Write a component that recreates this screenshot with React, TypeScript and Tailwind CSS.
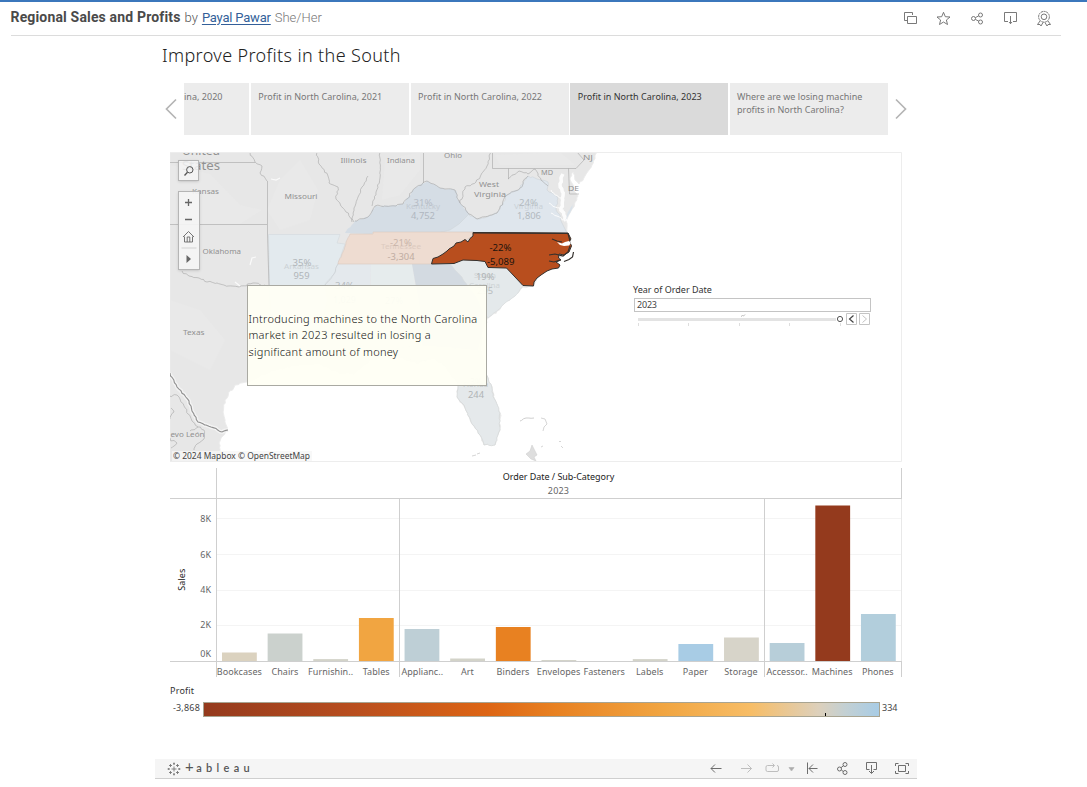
import React from 'react';

type Pt = [number, number];

// Builds an irregular line through the given points, as for rivers and coasts.
function rough(pts: Pt[], amp = 1, close = false): string {
  const out: string[] = [];
  let seed = 7;
  const rnd = () => {
    seed = (seed * 16807) % 2147483647;
    return seed / 2147483647 - 0.5;
  };
  const all = close ? [...pts, pts[0]] : pts;
  all.forEach((p, i) => {
    if (i === 0) {
      out.push(`M${p[0]} ${p[1]}`);
      return;
    }
    const q = all[i - 1];
    const len = Math.hypot(p[0] - q[0], p[1] - q[1]);
    const n = Math.max(1, Math.round(len / 2.5));
    for (let k = 1; k < n; k++) {
      const t = k / n;
      const x = q[0] + (p[0] - q[0]) * t + rnd() * 2 * amp;
      const y = q[1] + (p[1] - q[1]) * t + rnd() * 2 * amp;
      out.push(`L${x.toFixed(1)} ${y.toFixed(1)}`);
    }
    out.push(`L${p[0]} ${p[1]}`);
  });
  return out.join('') + (close ? 'Z' : '');
}

const mainland: Pt[] = [
  [597, 152], [592, 165], [585, 176], [579, 184], [575, 180], [573, 172], [570, 178], [574, 190], [578, 196], [573, 208],
  [566, 221], [567, 233], [570, 245], [558, 262], [548, 270], [537, 278], [533, 286], [523, 287], [515, 296], [505, 303], [497, 311], [488, 318],
  [482, 332], [481, 350], [486, 372], [492, 390], [500, 413], [500, 430], [495, 445], [484, 445], [480, 435], [471, 422], [465, 408],
  [457, 397], [458, 384], [445, 366], [433, 358], [418, 364], [400, 358], [370, 360], [355, 374], [340, 374], [320, 364], [295, 366],
  [270, 372], [247, 382], [235, 385], [225, 400], [223, 412], [227, 430], [219, 443], [221, 455], [218, 462],
];
const landPath = `M170 152L597 152${rough(mainland, 1).replace(/^M/, 'L')}L170 462Z`;

const kentucky: Pt[] = [
  [345, 233], [355, 221], [368, 217], [375, 206], [390, 206], [403, 204], [415, 188], [427, 181], [440, 188], [455, 190],
  [460, 203], [469, 214],
];
const virginiaTop: Pt[] = [
  [469, 214], [477, 219], [487, 217], [497, 213], [507, 195], [520, 188], [528, 176], [537, 179], [548, 182], [547, 190], [558, 198], [556, 208], [562, 223],
];
const nc =
  'M473 232.5L568 233L571 239L569.5 241L571.5 246L569 252L564 255L559 254L558.5 258L561 260L556 262L560 265L558.5 268L552 269L547 271L541 275L537 278L534 282L533.5 286L523 285.5L506.5 268L488 267.5L485 261.5L477 260.5L463 260L454 263.5L431.5 264L433 258.5L438 257L443 254L447 251L449 249L454 246L456 243L461 242L465 239.5L468 242L470 238.5L473 236Z';

const rioGrande = rough([[170, 373], [177, 387], [189, 401], [192, 411], [198, 422], [211, 427], [222, 432], [228, 430]], 0.7);

const borders: string[] = [
  'M170 162.5H255', 'M170 224.5H267', 'M267.5 181V234L269 285',
  rough([[250, 152], [255, 162], [262, 166], [260, 173], [267, 181]], 1),
  rough([[317, 152], [319, 164], [328, 176], [329, 183], [338, 187], [336, 199], [346, 212], [354, 222]], 1),
  rough([[380, 152], [380, 178], [376, 192], [372, 206]], 0.7),
  'M423.5 152V183',
  rough([[491, 152], [487, 166], [476, 182], [465, 187], [460, 203], [469, 214], [477, 219], [497, 213], [507, 195], [520, 188], [528, 176]], 1),
  rough([[352, 222], [354, 208], [358, 197], [362, 187], [368, 176]], 0.7),
  rough([[355, 221], [368, 217], [375, 206], [390, 206], [403, 204], [415, 188], [427, 181], [440, 188], [455, 190], [460, 203]], 1),
  'M492.5 152V168.500H576L584 160L577 152', 'M508.500 168.500V179', 'M568.500 168.500L569.500 194H579',
  rough([[508, 179], [519, 171], [528, 174], [535, 169], [541, 180], [548, 186]], 1),
  rough([[182, 271], [189, 276], [199, 278], [207, 282], [217, 283], [228, 286], [239, 287], [253, 283], [269, 287]], 1),
  rough([[170, 396], [177, 395], [180, 399], [184, 406], [188, 414], [192, 421], [198, 427]], 1.2),
  rough([[170, 419], [174, 412], [171, 408]], 1.5),
  rough([[194, 450], [197, 444], [204, 439], [204, 430], [198, 427], [190, 431]], 1),
  rough([[170, 438], [177, 443], [171, 448]], 1.5),
];

interface MapText {
  t: string;
  x: number;
  y: number;
  w: number;
  s?: number;
  c?: string;
}
const labels: MapText[] = [
  { t: 'United', x: 182, y: 155, w: 38, s: 12 },
  { t: 'States', x: 182, y: 169.5, w: 38, s: 12 },
  { t: 'Kansas', x: 192, y: 194, w: 27 },
  { t: 'Oklahoma', x: 202.500, y: 254, w: 38.500 },
  { t: 'Missouri', x: 284.500, y: 199, w: 33 },
  { t: 'Illinois', x: 340.500, y: 163, w: 26 },
  { t: 'Indiana', x: 387, y: 163, w: 28 },
  { t: 'Ohio', x: 444, y: 158, w: 18 },
  { t: 'West', x: 479, y: 186.500, w: 20 },
  { t: 'Virginia', x: 474, y: 196.500, w: 32 },
  { t: 'MD', x: 541, y: 175, w: 12 },
  { t: 'DE', x: 568, y: 191, w: 11 },
  { t: 'NJ', x: 583, y: 160, w: 10 },
  { t: 'Texas', x: 183, y: 335, w: 21.500 },
  { t: 'evo León', x: 170.500, y: 436.500, w: 34 },
  { t: 'Kentucky', x: 406, y: 208.500, w: 34, c: '#c3cad2' },
  { t: 'Virginia', x: 514, y: 208.500, w: 29, c: '#cad1d7' },
  { t: 'Tennessee', x: 381, y: 249, w: 40, c: '#dccabf' },
  { t: 'Arkansas', x: 284, y: 268.500, w: 35, c: '#cbd1d5' },
  { t: 'South', x: 474, y: 278, w: 22, c: '#cfd4d6' },
  { t: 'Carolina', x: 469, y: 288, w: 31, c: '#cfd4d6' },
  { t: '31%', x: 413.500, y: 205.500, w: 19, s: 8.500, c: '#b5bcc5' },
  { t: '4,752', x: 411, y: 219, w: 24, s: 8.500, c: '#b0b7c0' },
  { t: '24%', x: 519, y: 206, w: 19, s: 8.500, c: '#b4bbc1' },
  { t: '1,806', x: 517, y: 219, w: 24, s: 8.500, c: '#b2b9bf' },
  { t: '-21%', x: 390, y: 246, w: 22, s: 8.500, c: '#c9b5aa' },
  { t: '-3,304', x: 387.500, y: 259.500, w: 27, s: 8.500, c: '#bfaca2' },
  { t: '35%', x: 292.500, y: 265.500, w: 19, s: 8.500, c: '#b0b5b9' },
  { t: '959', x: 293.500, y: 279, w: 16, s: 8.500, c: '#b0b5b9' },
  { t: '19%', x: 476, y: 279.500, w: 18.500, s: 8.500, c: '#b0b4b6' },
  { t: '295', x: 477, y: 293.500, w: 16, s: 8.500, c: '#b8bcbe' },
  { t: '34%', x: 335, y: 289, w: 19, s: 8.500, c: '#b5babe' },
  { t: '1,029', x: 333, y: 303, w: 23, s: 8.500, c: '#b5babe' },
  { t: '27%', x: 385, y: 304, w: 18, s: 8.500, c: '#b5babe' },
  { t: 'Florida', x: 463, y: 387, w: 25, c: '#c6cacc' },
  { t: '3%', x: 470, y: 385, w: 12, s: 8.500, c: '#babec0' },
  { t: '244', x: 468, y: 397.500, w: 16, s: 8.500, c: '#b0b4b6' },
  { t: '-22%', x: 489.500, y: 251, w: 22, s: 8.500, c: '#21140d' },
  { t: '-5,089', x: 487, y: 264.500, w: 27.500, s: 8.500, c: '#21140d' },
];

function MapView() {
  return (
    <svg width="732" height="310" viewBox="170 152 732 310" className="block">
      <rect x="170" y="152" width="732" height="310" fill="#fff" />
      <path d={landPath} fill="#e7e7e7" stroke="#ececec" />
      <path d="M170 165L210 174L240 205L262 210L240 224H170ZM300 160L318 190L310 220L280 230L267 210L280 180ZM170 300L200 310L225 340L210 370L170 350ZM385 160L420 152V170L400 195L382 200ZM495 155L560 152L575 165H500Z" fill="#e9e9e9" />
      <path d="M268.500 234.500H340L337 243L345 244L338 264L334 274L325 284L328 300L320 330H270Z" fill="#e3eaee" stroke="#d5dbdf" strokeWidth=".7" />
      <path d="M338 264H371L368 358L355 356L352 340H320L328 300L325 284L334 274Z" fill="#e4e9ed" />
      <path d="M371.500 264V350M270 315H325" stroke="#cfd5d9" fill="none" strokeWidth=".7" />
      <path d="M371 264H412L422 330V345H385V358L371 356Z" fill="#e6eced" />
      <path d="M412 264H450L462 277L472 286L483 312L482 335L478 350H422V320Z" fill="#d3dae1" />
      <path d={rough([[450, 264], [463, 260], [485, 261], [488, 267], [507, 268], [523, 286], [515, 296], [505, 303], [497, 311], [488, 318], [478, 300], [462, 277]], 0.5, true)} fill="#e4e9eb" stroke="#d6dadb" strokeWidth=".6" />
      <path d={rough([[385, 350], [422, 345], [478, 350], [484, 372], [491, 384], [492, 392], [500, 413], [500, 430], [495, 445], [484, 445], [480, 435], [471, 422], [465, 408], [457, 397], [458, 384], [445, 366], [433, 358], [418, 362]], 0.8, true)} fill="#e5e9eb" stroke="#d3d5d6" strokeWidth=".7" />
      <path d={`${rough(kentucky, 1)}L459 224L450 230L440 232.500L373 232L372 234Z`} fill="#d5dde5" />
      <path d={`${rough(virginiaTop, 1)}L567 233L440 232.500L450 230L459 224Z`} fill="#dfe6ed" stroke="#cdd3d9" strokeWidth=".6" />
      <path d={`${rough([[338, 264], [343, 252], [346, 242], [350, 234]], 0.8)}H373V232H474V236L455 245L443 254L433 259L431 264Z`} fill="#eedcd1" stroke="#d8cac1" strokeWidth=".6" />
      <path d={rough([[338, 264], [334, 274], [325, 285]], 1)} fill="none" stroke="#c9cfd3" strokeWidth=".7" />
      <g fill="none" stroke="#fff" strokeWidth="2" opacity=".9">
        <path d={rough([[563, 174], [560, 184], [563, 196], [561, 208], [566, 221]], 1.2)} strokeWidth="3.500" />
        <path d={rough([[563, 198], [555, 195], [551, 190]], 1)} strokeWidth="1" />
        <path d={rough([[564, 210], [555, 207], [549, 203]], 1)} strokeWidth="1" />
        <path d={rough([[565, 220], [557, 216], [551, 213]], 1)} strokeWidth="1" />
      </g>
      <path d={rough([[574, 203], [568, 212], [565, 221], [570, 213]], 0.5, true)} fill="#d9e2ea" />
      {borders.map((d, i) => (
        <path key={i} d={d} fill="none" stroke="#a6a6a6" strokeWidth=".6" />
      ))}
      <path d={rioGrande} fill="none" stroke="#f3f3f3" strokeWidth="4" />
      <path d={rioGrande} fill="none" stroke="#909090" strokeWidth="1.100" />
      <path d="M250 265L252 258L256 257M235 282L240 286M271 179L276 180L280 178" stroke="#fafafa" fill="none" strokeWidth="1.200" />
      <path d={rough([[520, 421], [526, 418], [534, 418]], 0.6)} stroke="#cfcfcf" fill="none" />
      <path d="M541 418L545 419L547 424L544 427L543 431M559 441.500H561M561 446L563 448M541 447L543 446M472 456L476 455M477 454L480 453" stroke="#d6d6d6" fill="none" />
      <path d="M532 445L535 451L537 455L534 457L536 461L531 459L526 454L530 451Z" fill="#dedede" stroke="#cacaca" strokeWidth=".5" />
      <path d={nc} fill="#b84e1e" stroke="#34302d" strokeWidth="1" strokeLinejoin="round" />
      <path d="M569 241L565 242L562 243.500L557 242L560 245L564 246L569 245.500L571 243Z" fill="#fff" />
      <path d="M473 233L568 233.500L570 241M570 246L568 252L563 256L555 254L549 255M560 260L554 262L549 261M562 242L557 241L552 239M573.500 252L572.500 257L569 259.500L564 261.500" fill="none" stroke="#34302d" strokeWidth="1.200" />
      {labels.map((l, i) => (
        <text key={i} x={l.x} y={l.y} textLength={l.w} lengthAdjust="spacingAndGlyphs" fontSize={l.s ?? 7.5} fill={l.c ?? '#919191'} fontFamily="Noto Sans, sans-serif">
          {l.t}
        </text>
      ))}
      <rect x="172" y="451" width="140" height="10.500" fill="#f6f6f6" opacity=".8" />
      <text x="173" y="459" textLength="137" lengthAdjust="spacingAndGlyphs" fontSize="8.500" fill="#444" fontFamily="Noto Sans, sans-serif">
        © 2024 Mapbox  © OpenStreetMap
      </text>
      <path d="M170 152.500H901.500V461.500H170" fill="none" stroke="#ededed" />
    </svg>
  );
}

function MapControls() {
  return (
    <div className="absolute left-[8px] top-[8px] flex w-[22px] flex-col gap-[10px]">
      <div className="flex h-[21px] w-[21px] items-center justify-center border border-[#b5b5b5] bg-[#f5f5f5]/85 shadow-sm">
        <svg width="12" height="12" viewBox="0 0 12 12" fill="none" stroke="#555">
          <circle cx="6.800" cy="4.800" r="3.200" />
          <path d="M4.500 7.200L1.500 10.500" strokeWidth="1.300" />
        </svg>
      </div>
      <div className="flex h-[79px] w-[22px] flex-col border border-[#b5b5b5] bg-[#f5f5f5]/90 shadow-sm">
        <svg width="20" height="77" viewBox="0.5 0.5 20 77" fill="none" stroke="#666">
          <path d="M6.500 11H13.500M10 7.500V14.500M6.500 28H13.500" strokeWidth="1.300" />
          <path d="M4.500 45.500L10 40L15.500 45.500M6 45V50.500H14V45M8.700 50.500V45.500H11.300V50.500" strokeWidth=".9" />
          <path d="M3 56.500H18" stroke="#d2d2d2" />
          <path d="M8 63.500V71.500L12.500 67.500Z" fill="#666" stroke="none" />
        </svg>
      </div>
    </div>
  );
}

const points: { title: string; className: string }[] = [
  { title: 'ina, 2020', className: 'w-[65px] bg-[#ececec] pl-[0px] text-[#777]' },
  { title: 'Profit in North Carolina, 2021', className: 'w-[158px] bg-[#ececec] pl-[7.5px] text-[#777]' },
  { title: 'Profit in North Carolina, 2022', className: 'w-[158px] bg-[#ececec] pl-[7.5px] text-[#777]' },
  { title: 'Profit in North Carolina, 2023', className: 'w-[158px] bg-[#dadada] pl-[7.5px] text-[#333]' },
  { title: 'Where are we losing machine profits in North Carolina?', className: 'w-[158px] bg-[#ececec] pl-[7px] text-[#777]' },
];

const bars: { name: string; h: number; c: string }[] = [
  { name: 'Bookcases', h: 9, c: '#dbd2bf' },
  { name: 'Chairs', h: 28, c: '#cbd1cd' },
  { name: 'Furnishin..', h: 2.4, c: '#d3d3c9' },
  { name: 'Tables', h: 43.5, c: '#f1a541' },
  { name: 'Applianc..', h: 32.5, c: '#becfd6' },
  { name: 'Art', h: 3, c: '#d3d3c9' },
  { name: 'Binders', h: 34.5, c: '#e88121' },
  { name: 'Envelopes', h: 1.5, c: '#d3d3c9' },
  { name: 'Fasteners', h: 0, c: '#d3d3c9' },
  { name: 'Labels', h: 2.4, c: '#d3d3c9' },
  { name: 'Paper', h: 17.500, c: '#a8cce5' },
  { name: 'Storage', h: 24, c: '#d7d4c9' },
  { name: 'Accessor..', h: 18.500, c: '#b7ced9' },
  { name: 'Machines', h: 156, c: '#943a1d' },
  { name: 'Phones', h: 47.500, c: '#b2cedc' },
];

function Chart() {
  return (
    <div className="flex h-[211px] w-[732px]">
      <div className="flex w-[46px] flex-col">
        <div className="h-[31px] border-b border-[#cfcfcf]" />
        <div className="flex h-[163px] border-b border-[#cfcfcf]">
          <div className="flex w-[24px] items-center justify-center">
            <span className="-rotate-90 text-[9px] tracking-[0.1px] text-[#222]">Sales</span>
          </div>
          <div className="flex flex-1 flex-col pr-[5px] pt-[13px] text-right text-[9px] text-[#666]">
            <span className="h-[35.500px] leading-[13px]">8K</span>
            <span className="h-[35.500px] leading-[13px]">6K</span>
            <span className="h-[35px] leading-[13px]">4K</span>
            <span className="h-[28.500px] leading-[13px]">2K</span>
            <span className="leading-[13px]">0K</span>
          </div>
        </div>
      </div>
      <div className="flex w-[686px] flex-col">
        <div className="flex h-[31px] flex-col items-center border-x border-b border-[#cfcfcf] pr-[1px] pt-[2px] text-[9px]">
          <span className="whitespace-nowrap leading-[13px] tracking-[-0.040px] text-[#222]">Order Date / Sub-Category</span>
          <span className="leading-[15px] tracking-[0.2px] text-[#666]">2023</span>
        </div>
        <svg width="686" height="163" viewBox="0 0 686 163" className="block">
          <path d="M0 19.500H685M0 55.500H685M0 91.500H685M0 126.500H685" stroke="#f4f4f4" />
          {bars.map((b, i) => (
            <rect key={b.name} x={6 + i * 45.640} y={162.500 - b.h} width="34.800" height={b.h} fill={b.c} />
          ))}
          <path d="M0 162.500H686M.5 0V163M183.500 0V163M548.500 0V163" stroke="#cfcfcf" />
          <path d="M685.500 0V162" stroke="#e8e8e8" />
        </svg>
        <div className="grid h-[15px] grid-cols-15 border-x border-[#cfcfcf] text-[9px] leading-[19px] text-[#666]">
          {bars.map((b, i) => (
            <span
              key={b.name}
              className={`flex h-[15px] justify-center whitespace-nowrap pr-[0.800px] tracking-[0.060px] ${i === 4 || i === 12 ? 'border-l border-[#cfcfcf]' : ''}`}
            >
              {b.name}
            </span>
          ))}
        </div>
      </div>
    </div>
  );
}

function Slider() {
  return (
    <div className="absolute left-[463px] top-[132px] w-[240px]">
      <div className="text-[9px] leading-[12px] text-[#333]">Year of Order Date</div>
      <div className="ml-[1px] mt-[2px] h-[14px] w-[237px] border border-[#c4c4c4] bg-white pl-[2px] text-[9px] leading-[12px] tracking-[-0.200px] text-[#444]">2023</div>
      <svg width="240" height="18" viewBox="0 0 240 18" fill="none" className="block">
        <path d="M5 7.500H203" stroke="#e3e3e3" strokeWidth="3" />
        <path d="M5.500 11V14M55.500 11V14M106.500 11V14M156.500 11V14M207.500 11V14" stroke="#dedede" />
        <path d="M108 4.500L109.500 3.500L110.500 4L112 2.500" stroke="#b8b8b8" />
        <circle cx="207" cy="7" r="2.600" stroke="#555" fill="#fff" />
        <path d="M213.500 1.500H223.500V12.500H213.500ZM226.500 1.500H236.500V12.500H226.500Z" stroke="#c4c4c4" />
        <path d="M220.500 3.500L216.500 7L220.500 10.500" stroke="#444" strokeWidth="1.200" />
        <path d="M229.500 3.500L233.500 7L229.500 10.500" stroke="#c4c4c4" />
      </svg>
    </div>
  );
}

function HeaderIcons() {
  return (
    <svg width="150" height="18" viewBox="902 10 150 18" fill="none" stroke="#6b6b6b" strokeWidth=".9" className="block">
      <path d="M907 20.500H904.500V12.500H912.500V15M907.500 16.500H916.500V23.500H907.500Z" strokeLinejoin="round" />
      <path d="M943.500 12.300L945.300 16.700L950 17L946.400 20L947.500 24.500L943.500 22L939.500 24.500L940.600 20L937 17L941.700 16.700Z" />
      <circle cx="973.500" cy="18.500" r="2" />
      <circle cx="980.500" cy="15" r="2" />
      <circle cx="980.500" cy="22" r="2" />
      <path d="M975.500 17.500L978.700 15.900M975.500 19.500L978.700 21.100" />
      <path d="M1008 21.500H1004.500V12.500H1016.500V21.500H1013M1010.500 16V23.500M1009 22L1010.500 23.700L1012 22" />
      <circle cx="1044" cy="16.800" r="5.400" strokeDasharray="2.200 .5" />
      <circle cx="1044" cy="16.800" r="2.800" />
      <path d="M1040 21L1037.500 24.500H1040L1041 26L1043 22.500M1048 21L1050.500 24.500H1048L1047 26L1045 22.500" />
    </svg>
  );
}

function Footer() {
  return (
    <footer className="flex h-[20px] w-[762px] items-center justify-between border-b border-[#cfcfcf] bg-[#f5f5f5] pl-[12px] pr-[6px]">
      <div className="flex items-center gap-[4px]">
        <svg width="14" height="14" viewBox="0 0 14 14" stroke="#777" strokeWidth=".9">
          <path d="M7 4.500V9.500M4.500 7H9.500M7 0.500V3M6 1.700H8M7 11V13.500M6 12.300H8M0.500 7H3M1.700 6V8M11 7H13.500M12.300 6V8M3.500 2V5M2 3.500H5M10.500 2V5M9 3.500H12M3.500 9V12M2 10.500H5M10.500 9V12M9 10.500H12" />
        </svg>
        <span className="pb-[2px] font-['Lato',sans-serif] text-[11px] font-semibold leading-[16px] tracking-[4.300px] text-[#555]">
          <span className="text-[15px] font-normal leading-[12px] tracking-[2.500px]">+</span>ableau
        </span>
      </div>
      <svg width="202" height="18" viewBox="709 760 202 18" fill="none" stroke="#666" strokeWidth=".95" className="block">
        <path d="M721.500 768.500H711M715 764.500L711 768.500L715 772.500" />
        <g stroke="#bbb">
          <path d="M741 768.500H751.500M747.500 764.500L751.500 768.500L747.500 772.500" />
          <path d="M774 765.500H767.500Q766 765.500 766 767V770Q766 771.500 767.500 771.500H777Q778.500 771.500 778.500 770V767Q778.500 765.500 777 765.500M772.500 763.500L774.500 765.500L772.500 767.500" />
          <path d="M789 767.500H794L791.500 771Z" fill="#aaa" />
        </g>
        <path d="M807.500 762.500V774M817.500 768.500H809M813 764.500L809 768.500L813 772.500" />
        <circle cx="839.500" cy="769" r="2" />
        <circle cx="845" cy="764.500" r="2" />
        <circle cx="845" cy="772.500" r="2" />
        <path d="M841 767.700L843.500 765.700M841.300 770L843.200 771.400" />
        <path d="M869.500 769.500H866.500V762.500H876.500V769.500H873.500M871.500 765V773M869 771L871.500 773.500L874 771" />
        <path d="M898.500 765.500H905.500V771.500H898.500ZM898.500 763.500H895.500V766M905.500 763.500H908.500V766M898.500 773.500H895.500V771M905.500 773.500H908.500V771" />
      </svg>
    </footer>
  );
}

export default function App() {
  return (
    <div className="h-[787px] w-[1087px] overflow-hidden border-t-2 border-[#3b77bc] bg-white font-['Noto_Sans',sans-serif]">
      <header className="ml-[11px] flex h-[34px] w-[1050px] items-center justify-between border-b border-[#dcdcdc] pr-[9px] font-['Roboto',sans-serif]">
        <div className="flex items-baseline gap-[5px] whitespace-nowrap pb-[3px] text-[13px] leading-[18px]">
          <h1 className="-ml-[0.500px] text-[14px] font-bold tracking-[0.160px] text-[#4a4a4a]">Regional Sales and Profits</h1>
          <span className="-ml-[1px] font-light text-[#555]">by</span>
          <a href="#" className="-ml-[1px] tracking-[-0.200px] text-[#335f99] underline underline-offset-2">Payal Pawar</a>
          <span className="-ml-[1px] font-light text-[#777]">She/Her</span>
        </div>
        <HeaderIcons />
      </header>
      <main className="ml-[155px] w-[762px]">
        <h2 className="h-[47px] whitespace-nowrap pl-[7px] pt-[6px] text-[18px] font-light leading-[26px] tracking-[0.370px] text-[#222]">Improve Profits in the South</h2>
        <div className="flex h-[52px] items-center pl-[10px]">
          <svg width="19" height="22" viewBox="0 0 19 22" fill="none" stroke="#b5b5b5" strokeWidth="1.700">
            <path d="M11 1.500L1.500 11L11 20.500" />
          </svg>
          <div className="flex h-[52px] gap-[1.750px]">
            {points.map((p) => (
              <div key={p.title} className={`shrink-0 overflow-hidden pt-[7px] text-[9px] leading-[13px] tracking-[0.030px] ${p.className}`}>{p.title}</div>
            ))}
          </div>
          <svg width="19" height="22" viewBox="0 0 19 22" fill="none" stroke="#b5b5b5" strokeWidth="1.700" className="ml-[6px]">
            <path d="M2 1.500L11.500 11L2 20.500" />
          </svg>
        </div>
        <section className="relative ml-[15px] mt-[17px] h-[310px] w-[732px]">
          <MapView />
          <MapControls />
          <div className="absolute left-[77px] top-[133px] flex h-[101px] w-[240px] items-center border border-[#a9a9a2] bg-[#fffff4]/95">
            <p className="whitespace-nowrap pl-[0.5px] text-[11px] font-light leading-[16.500px] tracking-[0.280px] text-[#111]">
              Introducing machines to the North Carolina
              <br />
              market in 2023 resulted in losing a
              <br />
              significant amount of money
            </p>
          </div>
          <Slider />
        </section>
        <section className="ml-[15px] mt-[6px]">
          <Chart />
          <div className="mt-[5px] text-[9px] leading-[13px] tracking-[0.2px] text-[#333]">Profit</div>
          <div className="mt-[5px] flex h-[15px] items-start text-[9px] leading-[12px] text-[#444]">
            <span className="w-[33px] pr-[3px] text-right tracking-[0.200px]">-3,868</span>
            <div className="flex h-[15px] w-[677px] items-end border border-[#a8a491] bg-[linear-gradient(90deg,#943a1d_0%,#b84e1e_22%,#dd6514_42%,#e88121_52%,#f1a541_68%,#f7bd66_81%,#ddd0bb_91%,#c3d0d3_95%,#a8cce5_100%)]">
              <div className="ml-[621px] h-[3px] w-px bg-black" />
            </div>
            <span className="pl-[2px]">334</span>
          </div>
        </section>
        <div className="pt-[42px]">
          <Footer />
        </div>
      </main>
    </div>
  );
}
